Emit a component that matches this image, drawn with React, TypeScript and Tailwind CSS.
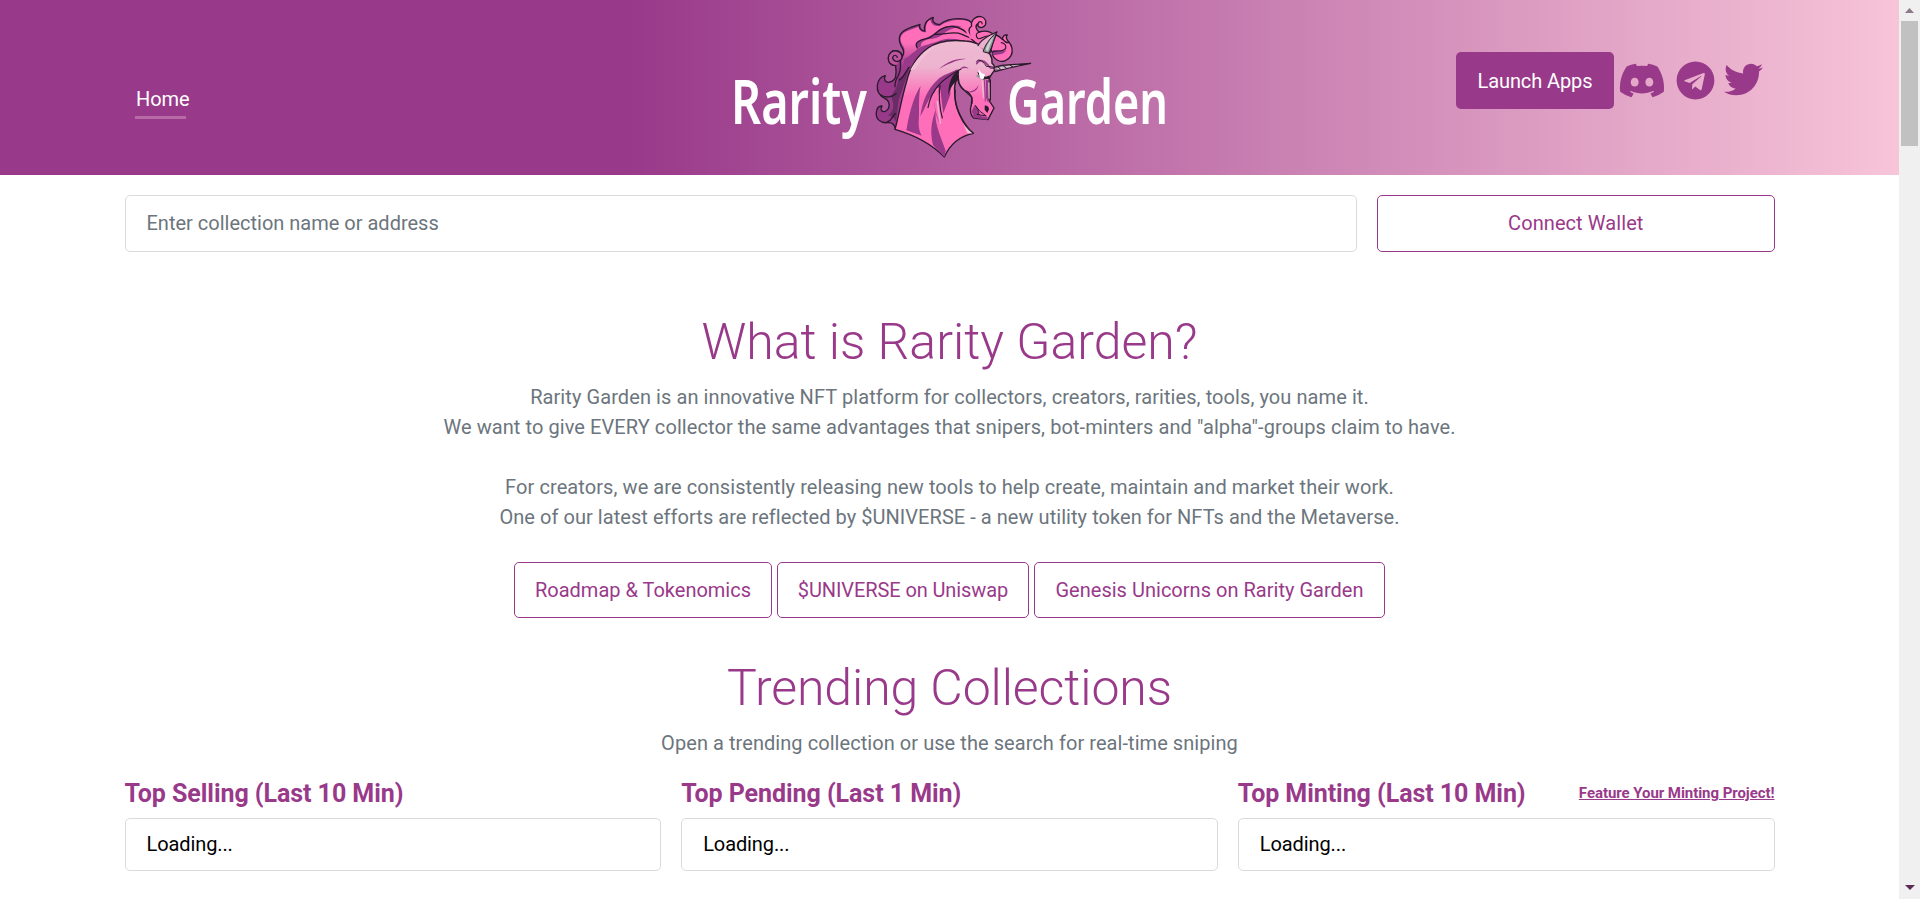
import React from "react";
import { FaDiscord, FaTelegram, FaTwitter } from "react-icons/fa";

const INK = "#2a1a2c";
const PLUM = "#99398a";
const PINK = "#ff6fb9";

function Unicorn() {
  return (
    <g transform="translate(135 0) scale(0.33333)" strokeLinejoin="round" strokeLinecap="round">
      {/* back of the mane */}
      <path
        d="M106 387C104 374 98 366 82 368C60 370 47 356 49 337C50 325 56 317 66 318C59 328 65 337 76 334C86 330 90 318 86 307C84 301 82 298 77 297C58 290 50 272 52 256C54 241 61 230 76 227C70 238 75 247 86 247C104 245 108 232 108 219C109 208 106 201 107 196C92 197 84 186 85 173C87 158 98 150 111 153C121 156 127 163 127 171C134 158 131 148 124 139C115 124 115 105 130 94C146 82 160 80 180 73C176 82 182 92 194 93C191 78 196 59 220 52C215 62 221 73 238 74C258 58 285 52 318 58C328 61 336 67 340 76L350 140L150 240Z"
        fill={PLUM} stroke={INK} strokeWidth="4"
      />
      <path d="M116 300L152 195L126 220C112 232 116 252 106 268C98 282 92 288 98 304C104 326 94 340 84 346C96 348 104 356 108 366Z" fill="#6a2c65" />
      {/* lit locks */}
      <path
        d="M129 171C138 156 134 143 127 135C118 118 121 106 134 97C147 88 160 88 175 80C178 93 188 98 199 97C196 84 197 66 211 59C213 72 224 80 240 78C264 60 300 56 325 64C346 78 350 92 360 108L356 130C320 120 270 116 234 126C200 138 166 164 142 210C132 226 118 235 111 231C118 215 122 193 129 171Z"
        fill="url(#mane)"
      />
      <path d="M133 176C145 173 157 159 177 144C190 135 217 131 236 123C266 111 294 118 318 124C280 119 246 122 211 144C180 160 156 180 144 205C136 220 128 232 115 236C125 222 128 206 133 176Z" fill={PLUM} />
      <path d="M174 144C165 132 174 121 190 116C209 112 224 100 241 88C259 76 280 74 306 79C285 84 268 87 254 99C245 107 229 116 211 117C193 119 181 128 183 139Z" fill={PLUM} />
      <g fill="none" stroke={INK} strokeWidth="4">
        <path d="M107 197C92 197 84 186 85 173C87 158 98 150 111 153C126 157 131 172 121 181" fill="#c0539f" />
        <path d="M121 181C112 188 98 183 98 172C100 164 110 164 112 172" />
        <path d="M172 144C160 126 183 119 199 116C218 111 226 98 242 88C264 74 295 76 320 98" />
        <path d="M147 202C135 218 129 236 118 240" />
        <path d="M225 103C252 106 278 91 306 103C323 112 338 114 351 122" />
        <path d="M62 284C77 296 96 291 108 281M82 366C98 360 96 347 106 341" />
        <path d="M121 181C122 196 124 210 115 226C109 236 104 246 105 260" />
      </g>
      {/* forelock and its two curls */}
      <path
        d="M333 116C326 100 322 86 335 78C331 60 350 45 366 51C382 58 380 77 369 81C360 85 351 79 354 71C343 77 349 90 358 96C378 90 393 96 403 105C414 104 421 112 428 119C426 109 433 104 442 105C434 112 441 120 447 127C456 136 460 154 453 167C445 182 426 189 411 180C401 174 397 166 398 157L378 130L354 134Z"
        fill={PINK} stroke={INK} strokeWidth="4"
      />
      <path d="M325 82C320 92 330 108 345 118L330 116L316 92Z" fill={PINK} />
      <path d="M398 151C414 146 423 157 440 150C429 166 414 163 398 166Z" fill={PLUM} />
      <g fill="none" stroke={INK} strokeWidth="3.5">
        <path d="M354 71C357 62 368 64 366 72M358 96C348 100 345 106 354 116C365 119 370 107 384 108" />
        <path d="M397 156C413 150 428 157 437 145C440 135 432 129 424 128M429 118C434 126 438 129 446 128" />
      </g>
      {/* neck and head */}
      <path
        d="M105 388C116 350 123 302 139 248C149 203 170 169 203 145C231 124 267 118 315 123C333 123 344 128 356 133L374 151C391 157 397 172 396 190C402 194 405 200 404 209C398 222 390 224 387 239L387 301L402 324L384 359L341 354C331 346 329 329 334 316L336 292C321 275 304 270 297 248L294 228C283 247 281 269 286 298C289 332 314 377 340 400C300 408 270 433 253 471C210 427 160 404 105 388Z"
        fill="url(#coat)" stroke={INK} strokeWidth="4"
      />
      {/* neck shading */}
      <path d="M139 391C147 345 159 292 182 257C174 294 179 330 176 365C175 381 178 394 185 407Z" fill={PLUM} />
      <path d="M219 435C207 387 219 351 228 326C221 365 239 401 257 452L253 471Z" fill={PLUM} />
      <path d="M181 349C187 306 201 267 235 237C250 224 269 220 293 207C279 232 272 253 271 284L250 340C246 316 244 290 240 260C229 300 229 338 243 376C221 342 221 309 228 274C208 286 202 313 181 349Z" fill={PLUM} />
      <path d="M228 263C217 300 226 343 242 374C237 339 233 307 236 264Z" fill={PINK} />
      <path d="M232 305L241 370" stroke="#ecb9d2" strokeWidth="4" />
      <path d="M265 280C266 255 271 239 280 225L295 208L297 232L286 250L279 274L285 247C274 259 269 270 265 286Z" fill={INK} />
      <path d="M281 308L309 374L341 399L318 400C296 373 286 343 281 308Z" fill={PINK} />
      <path d="M309 368L340 400L322 400Z" fill="#f5bed4" />
      <g fill="none" stroke={INK} strokeWidth="3.5">
        <path d="M204 323C213 272 240 240 303 207M240 257C236 286 239 324 247 354" />
        <path d="M296 215C287 232 297 268 323 275C333 282 338 293 336 310M286 270C278 315 307 375 340 400" />
      </g>
      <path d="M302 265C325 281 344 276 356 254C350 282 326 282 302 265Z" fill={PLUM} />
      <path d="M237 207C260 187 289 174 317 177C288 180 262 193 237 207ZM302 207C306 197 319 198 326 207C319 202 311 205 302 207Z" fill={PLUM} />
      <path d="M151 210C167 177 202 145 238 132C202 156 178 184 164 208Z" fill="#f2c0d6" />
      {/* eye and brow */}
      <path d="M350 191C357 178 370 179 382 193C390 205 394 206 402 204" fill="none" stroke={PLUM} strokeWidth="5" />
      <path d="M350 184C356 172 373 188 379 199L399 201" fill="none" stroke={INK} strokeWidth="3" />
      <path d="M352 215L365 225L378 230L389 226L391 236L367 239L357 230Z" fill={INK} />
      <path d="M355 207L363 218L376 224L369 239L359 234Z" fill="#fff" />
      <path d="M347 227L356 224L360 236Z" fill="#8b9296" />
      {/* muzzle */}
      <path d="M377 240L386 240L385 309L377 292ZM343 317L359 335L363 348L383 352L381 359L341 353L335 333Z" fill={PLUM} />
      <path d="M367 244L371 293M387 249L388 294" stroke="#ecb9d2" strokeWidth="5" />
      <path d="M374 317C379 315 387 320 387 328L382 339L374 329Z" fill={INK} />
      <path d="M346 317L360 334L379 348L351 343C361 344 356 330 346 317Z" fill={PINK} stroke={INK} strokeWidth="3" />
      <path d="M373 240L376 304" fill="none" stroke={PLUM} strokeWidth="3" />
      <path d="M391 240L391 300" fill="none" stroke={INK} strokeWidth="4" />
      {/* ear and horn */}
      <path d="M354 137C363 120 378 112 391 105L411 95C407 108 403 119 398 132L391 158L377 152" fill="#eab1cd" stroke={INK} strokeWidth="3.5" />
      <path d="M370 154C374 137 386 120 410 96C402 118 397 139 387 159Z" fill="#8d9797" stroke={INK} strokeWidth="3" />
      <path d="M377 150C379 136 390 121 401 108C394 127 389 138 384 154Z" fill="#cbd2d0" />
      <path d="M401 202L425 196L512 190L447 204L405 215Z" fill="#9b7890" stroke={INK} strokeWidth="3.5" />
      <path d="M406 207L425 200L479 194L428 207Z" fill="#d6bfce" />
      <path d="M414 201L421 207M431 199L438 203M451 196L458 200" stroke={INK} strokeWidth="3" />
    </g>
  );
}

function Logo() {
  return (
    <svg width="460" height="175" viewBox="0 0 460 175" className="block overflow-visible" aria-label="Rarity Garden">
      <defs>
        <linearGradient id="coat" x1="0" y1="0" x2="0" y2="1">
          <stop offset="0" stopColor="#efbad2" />
          <stop offset="0.22" stopColor="#edb4cf" />
          <stop offset="0.48" stopColor={PINK} />
          <stop offset="1" stopColor={PINK} />
        </linearGradient>
        <linearGradient id="mane" x1="0" y1="0" x2="0" y2="1">
          <stop offset="0.4" stopColor={PINK} />
          <stop offset="0.85" stopColor={PLUM} />
        </linearGradient>
      </defs>
      <g fill="#fff" fontFamily="'Noto Sans', 'Open Sans', sans-serif" fontWeight="650" fontSize="61">
        <text x="6" y="124" textLength="136" lengthAdjust="spacingAndGlyphs">Rarity</text>
        <text x="282" y="124" textLength="161" lengthAdjust="spacingAndGlyphs">Garden</text>
      </g>
      <Unicorn />
    </svg>
  );
}

const outline =
  "flex items-center justify-center rounded-[5px] border border-[#99398a] bg-white text-[#99398a]";

function Column({ title, link }: { title: string; link?: string }) {
  return (
    <div className="min-w-0 flex-1">
      <div className="flex h-[30px] items-center justify-between">
        <h3 className="pt-[2px] text-[25px] leading-[30px] font-bold tracking-[-0.06px] whitespace-nowrap text-[#99398a]">
          {title}
        </h3>
        {link && (
          <a href="#" className="text-[15px] font-bold tracking-[-0.06px] whitespace-nowrap text-[#99398a] underline">
            {link}
          </a>
        )}
      </div>
      <div className="mt-[10px] flex h-[53px] items-center rounded-[5px] border border-[#dbdbdb] pb-[2px] pl-[21px] tracking-[-0.1px] text-black">
        Loading...
      </div>
    </div>
  );
}

export default function App() {
  return (
    <div className="flex h-[899px] w-full overflow-hidden bg-white font-['Roboto',sans-serif] text-[20px] leading-[30px]">
      <div className="min-w-0 flex-1">
        <header className="grid h-[175px] grid-cols-[725px_460px_1fr] bg-[linear-gradient(90deg,#99398a_33%,#f7c4d8_100%)]">
          <nav className="pt-[84px] pl-[136px]">
            <a href="#" className="inline-block tracking-[-0.1px] text-white">
              Home
              <span className="mt-[2px] -ml-px block h-[3px] w-[51px] bg-[#b76aa6]" />
            </a>
          </nav>
          <Logo />
          <div className="flex items-start pt-[52px] pl-[271px] text-[#99398a]">
            <button className="h-[57px] w-[158px] shrink-0 rounded-[5px] bg-[#99398a] tracking-[-0.1px] text-white">
              Launch Apps
            </button>
            <FaDiscord className="mt-[6px] ml-[4px] h-[45px] w-[48px] shrink-0" />
            <FaTelegram className="mt-[9px] ml-[10px] size-[39px] shrink-0" />
            <FaTwitter className="mt-[8px] ml-[9px] size-[39px] shrink-0" />
          </div>
        </header>

        <main className="mx-auto w-[1650px]">
          <div className="mt-5 flex gap-5">
            <input
              className="h-[57px] w-[1232.5px] rounded-[5px] border border-[#dbdbdb] pb-[2px] pl-[21px] outline-none placeholder:text-[#6c757d]"
              placeholder="Enter collection name or address"
            />
            <button className={`${outline} h-[57px] flex-1 pb-[2px] tracking-[0.08px]`}>Connect Wallet</button>
          </div>

          <section className="mt-[60px] text-center text-[#6c757d]">
            <h1 className="text-[50px] leading-[60px] font-light text-[#99398a]">What is Rarity Garden?</h1>
            <p className="mt-[10px] tracking-[0.08px]">
              Rarity Garden is an innovative NFT platform for collectors, creators, rarities, tools, you name it.
              <br />
              We want to give EVERY collector the same advantages that snipers, bot-minters and "alpha"-groups claim to
              have.
              <br />
              <br />
              For creators, we are consistently releasing new tools to help create, maintain and market their work.
              <br />
              <span className="tracking-[0.05px]">
                One of our latest efforts are reflected by $UNIVERSE - a new utility token for NFTs and the Metaverse.
              </span>
            </p>
            <div className="mt-[30px] flex justify-center gap-[5px]">
              <a href="#" className={`${outline} h-14 w-[258px]`}>Roadmap &amp; Tokenomics</a>
              <a href="#" className={`${outline} h-14 w-[252px] tracking-[-0.1px]`}>$UNIVERSE on Uniswap</a>
              <a href="#" className={`${outline} h-14 w-[351px] tracking-[0.02px]`}>Genesis Unicorns on Rarity Garden</a>
            </div>
          </section>

          <section className="mt-10 text-center text-[#6c757d]">
            <h2 className="text-[50px] leading-[60px] font-light tracking-[-0.1px] text-[#99398a]">Trending Collections</h2>
            <p className="mt-[10px] tracking-[0.06px]">Open a trending collection or use the search for real-time sniping</p>
          </section>

          <section className="mt-5 flex gap-5">
            <Column title="Top Selling (Last 10 Min)" />
            <Column title="Top Pending (Last 1 Min)" />
            <Column title="Top Minting (Last 10 Min)" link="Feature Your Minting Project!" />
          </section>
        </main>
      </div>

      <aside className="flex w-[21px] shrink-0 flex-col items-center bg-[#f0f0f0]">
        <div className="flex h-[21px] items-center">
          <svg width="9" height="5" viewBox="0 0 9 5"><path d="M0 5L4.5 0L9 5Z" fill="#8b7b88" /></svg>
        </div>
        <div className="h-[125px] w-[17px] bg-[#c1c1c1]" />
        <div className="mt-auto flex h-[23px] items-center">
          <svg width="10" height="5" viewBox="0 0 10 5"><path d="M0 0L5 5L10 0Z" fill="#5d2a58" /></svg>
        </div>
      </aside>
    </div>
  );
}
